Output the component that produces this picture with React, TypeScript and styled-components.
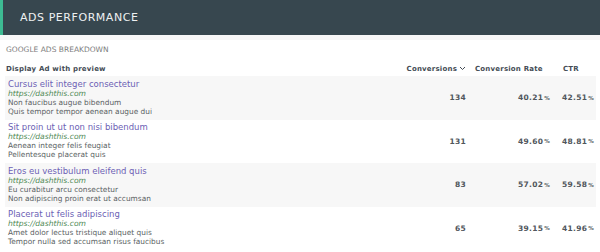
import styled, { createGlobalStyle } from 'styled-components';

const GlobalStyle = createGlobalStyle`
	body {
		margin: 0;
		background: #ffffff;
		font-family: "DejaVu Sans", "Open Sans", sans-serif;
	}
`;

const Widget = styled.div`
	width: 600px;
	height: 252px;
	overflow: hidden;
	background: #ffffff;
`;

const Header = styled.div`
	height: 35px;
	display: flex;
	align-items: center;
	padding-left: 17px;
	background: #37474f;
	border-left: 3px solid #3dbb93;
	box-sizing: border-box;
`;

const Title = styled.h1`
	margin: 0;
	font-size: 11px;
	font-weight: 400;
	color: #eef1f2;
	letter-spacing: 0.55px;
`;

const Strip = styled.div`
	height: 5px;
	background: #f7f7f7;
`;

const Body = styled.div`
	padding: 0 4px 0 5px;
`;

const Subtitle = styled.div`
	font-size: 7.5px;
	color: #7d7d7d;
	padding: 5px 0 0 1px;
	height: 16px;
	line-height: 10px;
`;

const Grid = styled.div`
	display: grid;
	grid-template-columns: 1fr 65px 84px 44px;
`;

const HeadCell = styled.div<{ $align?: string; $indent?: number }>`
	font-size: 7px;
	font-weight: 700;
	color: #444c55;
	height: 15px;
	display: flex;
	align-items: center;
	justify-content: ${(p) => p.$align || 'flex-start'};
	padding: 0 2px 0 ${(p) => p.$indent ?? 1}px;
	white-space: nowrap;
	letter-spacing: 0.2px;
`;

const Row = styled.div<{ $shade: boolean }>`
	display: contents;
	& > div {
		background: ${(p) => (p.$shade ? '#f7f7f7' : '#ffffff')};
	}
`;

const AdCell = styled.div`
	padding: 3px 3px 4px 3px;
	height: 43.5px;
	box-sizing: border-box;
	display: flex;
	flex-direction: column;
	justify-content: center;
`;

const AdTitle = styled.div`
	font-size: 8.5px;
	color: #6c5fb5;
	line-height: 11px;
`;

const AdUrl = styled.div`
	font-size: 7.6px;
	font-style: italic;
	color: #4f8a55;
	line-height: 8px;
`;

const AdLine = styled.div`
	font-size: 7.4px;
	color: #5a5f63;
	line-height: 9px;
`;

const NumCell = styled.div`
	display: flex;
	align-items: center;
	justify-content: flex-end;
	font-size: 7.5px;
	font-weight: 700;
	color: #50565c;
	padding-right: 2px;
	letter-spacing: 0.3px;
`;

const Pct = styled.span`
	font-size: 5.5px;
	margin-left: 1px;
`;

const Chevron = () => (
	<svg width="7" height="5" viewBox="0 0 7 5" style={{ marginLeft: 2 }}>
		<path d="M1 1 L3.5 3.5 L6 1" fill="none" stroke="#444c55" strokeWidth="1" />
	</svg>
);

type Ad = {
	title: string;
	lines: [string, string];
	conversions: number;
	rate: string;
	ctr: string;
};

const ads: Ad[] = [
	{
		title: 'Cursus elit integer consectetur',
		lines: ['Non faucibus augue bibendum', 'Quis tempor tempor aenean augue dui'],
		conversions: 134,
		rate: '40.21',
		ctr: '42.51',
	},
	{
		title: 'Sit proin ut ut non nisi bibendum',
		lines: ['Aenean integer felis feugiat', 'Pellentesque placerat quis'],
		conversions: 131,
		rate: '49.60',
		ctr: '48.81',
	},
	{
		title: 'Eros eu vestibulum eleifend quis',
		lines: ['Eu curabitur arcu consectetur', 'Non adipiscing proin erat ut accumsan'],
		conversions: 83,
		rate: '57.02',
		ctr: '59.58',
	},
	{
		title: 'Placerat ut felis adipiscing',
		lines: ['Amet dolor lectus tristique aliquet quis', 'Tempor nulla sed accumsan risus faucibus'],
		conversions: 65,
		rate: '39.15',
		ctr: '41.96',
	},
];

const App = () => {
	return (
		<Widget>
			<GlobalStyle />
			<Header>
				<Title>ADS PERFORMANCE</Title>
			</Header>
			<Strip />
			<Body>
				<Subtitle>GOOGLE ADS BREAKDOWN</Subtitle>
				<Grid>
					<HeadCell>Display Ad with preview</HeadCell>
					<HeadCell $align="flex-end">
						Conversions
						<Chevron />
					</HeadCell>
					<HeadCell $indent={7}>Conversion Rate</HeadCell>
					<HeadCell $indent={11}>CTR</HeadCell>
					{ads.map((ad, i) => (
						<Row key={ad.title} $shade={i % 2 === 0}>
							<AdCell>
								<AdTitle>{ad.title}</AdTitle>
								<AdUrl>https://dashthis.com</AdUrl>
								<AdLine>{ad.lines[0]}</AdLine>
								<AdLine>{ad.lines[1]}</AdLine>
							</AdCell>
							<NumCell>{ad.conversions}</NumCell>
							<NumCell>
								{ad.rate}
								<Pct>%</Pct>
							</NumCell>
							<NumCell>
								{ad.ctr}
								<Pct>%</Pct>
							</NumCell>
						</Row>
					))}
				</Grid>
			</Body>
		</Widget>
	);
};

export default App;
